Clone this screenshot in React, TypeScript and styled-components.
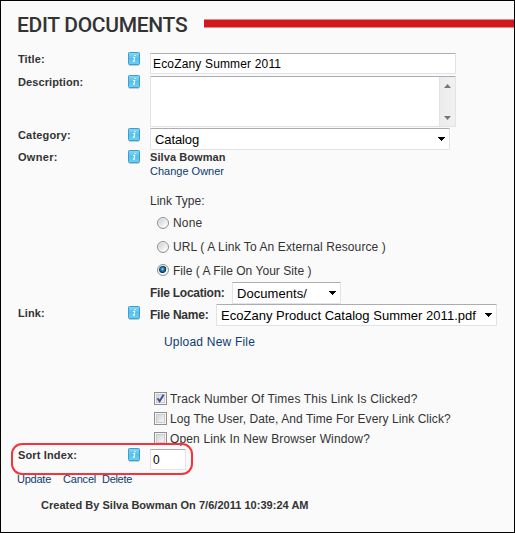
import React from 'react';
import styled, { createGlobalStyle } from 'styled-components';

const GlobalStyle = createGlobalStyle`
  *, *::before, *::after { box-sizing: border-box; }
  html, body { margin: 0; padding: 0; background: #fafafa; }
  body { font-family: "Liberation Sans", Arial, sans-serif; color: #333; }
`;

const Page = styled.main`
  position: relative;
  width: 515px;
  height: 533px;
  overflow: hidden;
  border: 1px solid #000;
  background: #fafafa;
`;

const Header = styled.header`
  display: flex;
  align-items: center;
  height: 50px;
  padding-left: 16px;
`;

const Heading = styled.h1`
  flex: none;
  width: 187px;
  margin: 0 0 2px;
  font: 500 21px/30px Roboto, sans-serif;
  letter-spacing: -0.3px;
  white-space: nowrap;
`;

const HeaderRule = styled.div`
  flex: 1;
  height: 9px;
  margin-bottom: 5px;
  background: #d2181c;
  border: solid #e58a8c;
  border-width: 1px 0;
`;

const Row = styled.section<{ $height: number }>`
  display: grid;
  grid-template-columns: 110px 22px 1fr;
  height: ${(p) => p.$height}px;
  padding-left: 17px;
`;

const Label = styled.label<{ $top?: number; $spacing?: number }>`
  padding-top: ${(p) => p.$top ?? 0}px;
  font-size: 11px;
  font-weight: bold;
  line-height: 14px;
  letter-spacing: ${(p) => p.$spacing ?? 0.1}px;
`;

const Help = styled.span<{ $top?: number }>`
  display: block;
  padding-top: ${(p) => p.$top ?? 0}px;
  line-height: 0;
`;

const Field = styled.div<{ $top?: number }>`
  display: flex;
  flex-direction: column;
  align-items: flex-start;
  padding-top: ${(p) => p.$top ?? 0}px;
`;

const Line = styled.div<{ $height: number; $indent?: number; $gap?: number }>`
  display: flex;
  align-items: center;
  height: ${(p) => p.$height}px;
  margin-top: ${(p) => p.$gap ?? 0}px;
  padding-left: ${(p) => p.$indent ?? 0}px;
`;

const Text = styled.span<{ $size?: number; $bold?: boolean; $spacing?: number; $width?: number }>`
  flex: none;
  width: ${(p) => (p.$width ? `${p.$width}px` : 'auto')};
  font-size: ${(p) => p.$size ?? 12}px;
  font-weight: ${(p) => (p.$bold ? 'bold' : 'normal')};
  letter-spacing: ${(p) => p.$spacing ?? 0}px;
  white-space: pre;
`;

const Link = styled.a<{ $size?: number; $spacing?: number }>`
  color: #0d3c6e;
  font-size: ${(p) => p.$size ?? 11}px;
  letter-spacing: ${(p) => p.$spacing ?? 0}px;
  white-space: nowrap;
`;

const Box = styled.div<{ $width: number; $height?: number }>`
  display: flex;
  align-items: center;
  flex: none;
  width: ${(p) => p.$width}px;
  height: ${(p) => p.$height ?? 21}px;
  border: 1px solid #e2e3ea;
  border-top-color: #abadb3;
  border-radius: 1px;
  background: #fff;
  color: #000;
`;

const TextBox = styled(Box)`
  padding-left: 2px;
`;

const SelectBox = styled(Box)`
  justify-content: space-between;
  padding: 0 4px;
`;

const TextArea = styled(Box)`
  justify-content: flex-end;
  align-items: stretch;
`;

const Scrollbar = styled.div`
  display: flex;
  flex-direction: column;
  align-items: center;
  justify-content: space-between;
  width: 16px;
  padding: 7px 0 6px;
  border-left: 1px solid #e3e3e3;
  background: linear-gradient(90deg, #ececec, #f1f1f1);
`;

const RadioDot = styled.span<{ $on?: boolean }>`
  width: 12px;
  height: 12px;
  margin: 0 4px 1px 0;
  border: 1px solid #8e8f8f;
  border-radius: 50%;
  background: ${(p) =>
    p.$on
      ? 'radial-gradient(circle at 45% 42%, #9fe0f6 0, #2586b5 1.5px, #0b3352 3.4px, #f4f6f7 4.2px)'
      : 'linear-gradient(135deg, #c4c8cd, #f8f8f8 75%)'};
  box-shadow: inset 0 0 0 1px #f4f4f4;
`;

const CheckSquare = styled.span`
  display: flex;
  width: 13px;
  height: 13px;
  margin: 0 3px 1px 0;
  border: 1px solid #8e8f8f;
  background: linear-gradient(135deg, #c8ccd1, #f6f6f6 85%);
  box-shadow: inset 0 0 0 1px #f4f4f4, inset 0 0 0 2px #c8cbd0;
`;

const Actions = styled.nav`
  display: flex;
  align-items: center;
  height: 14px;
  padding-left: 16px;
`;

const ActionSlot = styled.span<{ $width: number }>`
  display: block;
  width: ${(p) => p.$width}px;
  line-height: 14px;
  font-size: 11px;
`;

const Footer = styled.footer`
  padding: 12px 0 0 40px;
  font-size: 11px;
  font-weight: bold;
  line-height: 14px;
  letter-spacing: 0.03px;
`;

/* Callout ring that lies over the sort index row. */
const Highlight = styled.div`
  position: absolute;
  left: 10px;
  top: 442px;
  width: 182px;
  height: 32px;
  border: 2px solid #f5333b;
  border-radius: 11px;
`;

const HelpIcon = ({ top }: { top?: number }) => (
  <Help $top={top}>
    <svg width="13" height="15" viewBox="0 0 13 15">
      <defs>
        <linearGradient id="help" x1="0" y1="0" x2="0" y2="1">
          <stop offset="0" stopColor="#8bd7f2" />
          <stop offset="0.5" stopColor="#57c0ea" />
          <stop offset="1" stopColor="#6bd0f7" />
        </linearGradient>
      </defs>
      <path d="M1 13.5h10" stroke="#c9cccf" />
      <rect x="0.5" y="0.5" width="11" height="12" rx="0.8" fill="url(#help)" stroke="#3b9fd2" />
      <path d="M6.4 3.5h1.4M5 5.5h1.7L6 8.9M4.9 9.1h2" stroke="#f4fcff" strokeWidth="1.05" fill="none" />
    </svg>
  </Help>
);

const Arrow = () => (
  <svg width="7" height="4" viewBox="0 0 7 4" shapeRendering="crispEdges">
    <path d="M0 0h7v1h-1v1h-1v1h-1v1h-1v-1h-1v-1h-1v-1h-1z" fill="#000" />
  </svg>
);

const ScrollArrow = ({ down }: { down?: boolean }) => (
  <svg width="7" height="4" viewBox="0 0 7 4">
    <path d={down ? 'M0 0h7L3.5 4z' : 'M0 4h7L3.5 0z'} fill="#777" />
  </svg>
);

const Radio = ({ text, on, spacing, height = 24 }: { text: string; on?: boolean; spacing: number; height?: number }) => (
  <Line $height={height} $indent={7}>
    <RadioDot $on={on} />
    <Text $spacing={spacing}>{text}</Text>
  </Line>
);

const Check = ({ text, on, spacing }: { text: string; on?: boolean; spacing: number }) => (
  <Line $height={20} $indent={4}>
    <CheckSquare>
      {on && (
        <svg width="11" height="11" viewBox="0 0 11 11">
          <path d="M2.5 5.2L4.6 8.3L8.6 1.8" stroke="#3b4f93" strokeWidth="1.9" fill="none" />
        </svg>
      )}
    </CheckSquare>
    <Text $spacing={spacing}>{text}</Text>
  </Line>
);

export default function App() {
  return (
    <>
      <GlobalStyle />
      <Page>
        <Header>
          <Heading>EDIT DOCUMENTS</Heading>
          <HeaderRule />
        </Header>
        <Row $height={24}>
          <Label $top={1}>Title:</Label>
          <HelpIcon top={1} />
          <Field $top={2}>
            <TextBox $width={306}>
              <Text $spacing={0.16}>EcoZany Summer 2011</Text>
            </TextBox>
          </Field>
        </Row>
        <Row $height={53}>
          <Label>Description:</Label>
          <HelpIcon />
          <Field $top={1}>
            <TextArea $width={306} $height={51}>
              <Scrollbar>
                <ScrollArrow />
                <ScrollArrow down />
              </Scrollbar>
            </TextArea>
          </Field>
        </Row>
        <Row $height={22}>
          <Label $spacing={0.18}>Category:</Label>
          <HelpIcon />
          <Field>
            <SelectBox $width={300} $height={22}>
              <Text $size={13} $spacing={-0.1}>Catalog</Text>
              <Arrow />
            </SelectBox>
          </Field>
        </Row>
        <Row $height={36}>
          <Label $spacing={0.3}>Owner:</Label>
          <HelpIcon />
          <Field>
            <Line $height={14}>
              <Text $size={11} $bold $spacing={0.08}>Silva Bowman</Text>
            </Line>
            <Line $height={14}>
              <Link>Change Owner</Link>
            </Line>
          </Field>
        </Row>
        <Row $height={262}>
          <Label $top={120}>Link:</Label>
          <HelpIcon top={120} />
          <Field $top={4}>
            <Line $height={21}><Text>Link Type:</Text></Line>
            <Radio text="None" spacing={0.2} />
            <Radio text="URL ( A Link To An External Resource )" spacing={0.11} />
            <Radio text="File ( A File On Your Site )" spacing={0.04} on height={23} />
            <Line $height={22}>
              <Text $bold $spacing={-0.25} $width={82}>File Location:</Text>
              <SelectBox $width={109} $height={22}>
                <Text $size={13} $spacing={0.06}>Documents/</Text>
                <Arrow />
              </SelectBox>
            </Line>
            <Line $height={22}>
              <Text $bold $spacing={-0.22} $width={66}>File Name:</Text>
              <SelectBox $width={281} $height={22}>
                <Text $size={13} $spacing={0.02}>EcoZany Product Catalog Summer 2011.pdf</Text>
                <Arrow />
              </SelectBox>
            </Line>
            <Line $height={23} $indent={14} $gap={4}>
              <Link $size={12} $spacing={0.2}>Upload New File</Link>
            </Line>
            <Line $height={36} />
            <Check text="Track Number Of Times This Link Is Clicked?" spacing={0.174} on />
            <Check text="Log The User, Date, And Time For Every Link Click?" spacing={0.07} />
            <Check text="Open Link In New Browser Window?" spacing={0.143} />
          </Field>
        </Row>
        <Row $height={24}>
          <Label $spacing={0.14}>Sort Index:</Label>
          <HelpIcon />
          <Field $top={1}>
            <TextBox $width={36}>
              <Text>0</Text>
            </TextBox>
          </Field>
        </Row>
        <Actions>
          <ActionSlot $width={46}><Link $spacing={-0.24}>Update</Link></ActionSlot>
          <ActionSlot $width={39}><Link $spacing={-0.2}>Cancel</Link></ActionSlot>
          <ActionSlot $width={34}><Link $spacing={-0.3}>Delete</Link></ActionSlot>
        </Actions>
        <Footer>Created By Silva Bowman On 7/6/2011 10:39:24 AM</Footer>
        <Highlight />
      </Page>
    </>
  );
}
